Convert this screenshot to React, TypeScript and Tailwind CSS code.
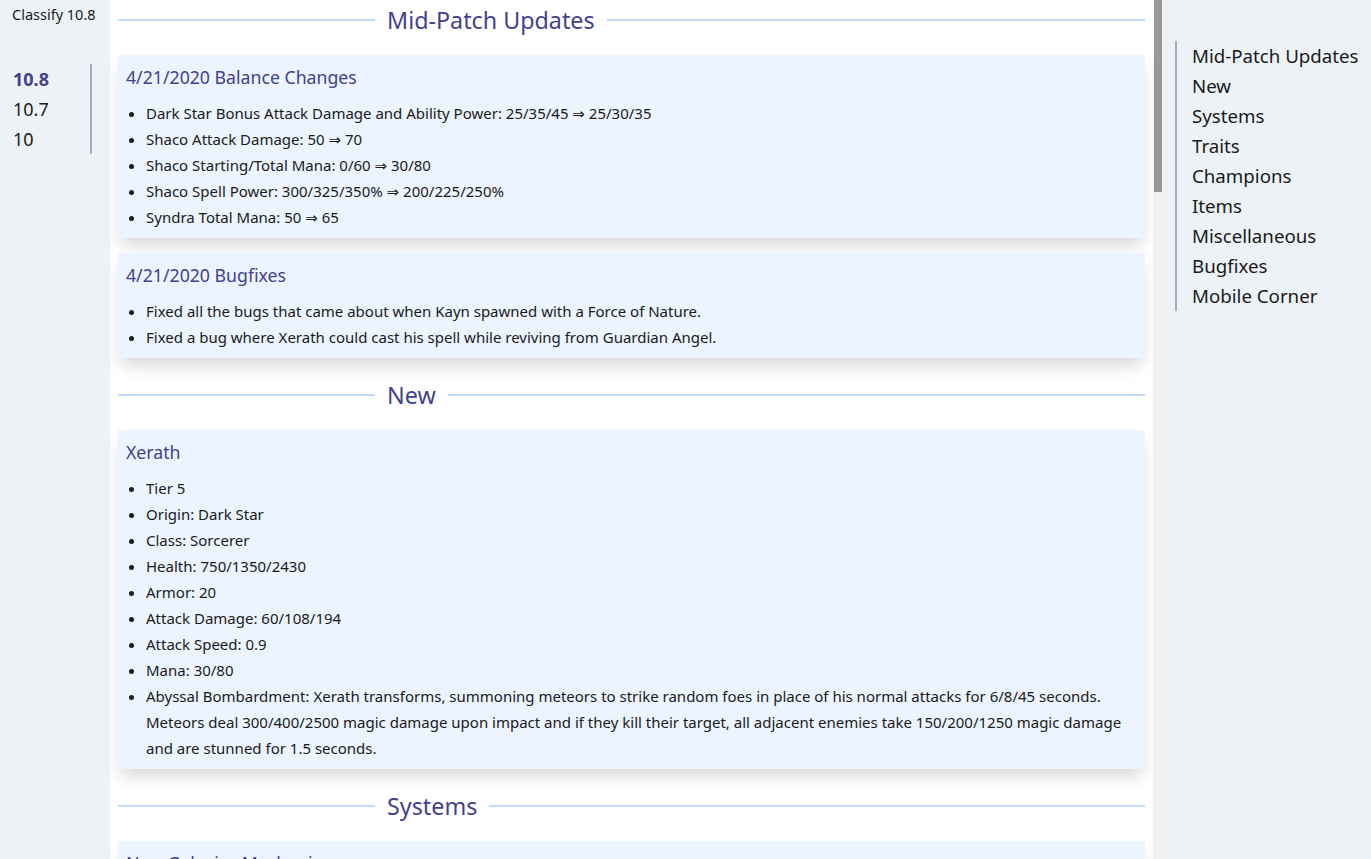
import React from "react";

type Card = { title: string; items: string[] };
type Section = { name: string; cards: Card[] };

const sections: Section[] = [
  {
    name: "Mid-Patch Updates",
    cards: [
      {
        title: "4/21/2020 Balance Changes",
        items: [
          "Dark Star Bonus Attack Damage and Ability Power: 25/35/45 ⇒ 25/30/35",
          "Shaco Attack Damage: 50 ⇒ 70",
          "Shaco Starting/Total Mana: 0/60 ⇒ 30/80",
          "Shaco Spell Power: 300/325/350% ⇒ 200/225/250%",
          "Syndra Total Mana: 50 ⇒ 65",
        ],
      },
      {
        title: "4/21/2020 Bugfixes",
        items: [
          "Fixed all the bugs that came about when Kayn spawned with a Force of Nature.",
          "Fixed a bug where Xerath could cast his spell while reviving from Guardian Angel.",
        ],
      },
    ],
  },
  {
    name: "New",
    cards: [
      {
        title: "Xerath",
        items: [
          "Tier 5",
          "Origin: Dark Star",
          "Class: Sorcerer",
          "Health: 750/1350/2430",
          "Armor: 20",
          "Attack Damage: 60/108/194",
          "Attack Speed: 0.9",
          "Mana: 30/80",
          "Abyssal Bombardment: Xerath transforms, summoning meteors to strike random foes in place of his normal attacks for 6/8/45 seconds. Meteors deal 300/400/2500 magic damage upon impact and if they kill their target, all adjacent enemies take 150/200/1250 magic damage and are stunned for 1.5 seconds.",
        ],
      },
    ],
  },
  {
    name: "Systems",
    cards: [
      {
        title: "New Galaxies Mechanic",
        items: ["Galaxies are now chosen at the start of each game."],
      },
    ],
  },
];

const toc = [
  "Mid-Patch Updates",
  "New",
  "Systems",
  "Traits",
  "Champions",
  "Items",
  "Miscellaneous",
  "Bugfixes",
  "Mobile Corner",
];

function SectionHeader({ name, first }: { name: string; first: boolean }) {
  return (
    <div className={`flex items-center h-[30px] ${first ? "" : "mt-[22px]"}`}>
      <div className="w-[257px] h-[2px] bg-[#c3dafe]" />
      <div className="px-[12px] text-[23.3px] leading-[30px] text-[#434190] whitespace-nowrap">
        {name}
      </div>
      <div className="flex-1 h-[2px] bg-[#c3dafe]" />
    </div>
  );
}

function CardView({ card, first }: { card: Card; first: boolean }) {
  return (
    <div
      className={`bg-[#ebf4ff] pt-[10px] pb-[8px] px-[8px] shadow-[0_10px_16px_-3px_rgba(0,0,0,0.16)] ${
        first ? "mt-[20px]" : "mt-[15px]"
      }`}
    >
      <div className="text-[17.7px] leading-[24px] text-[#434190]">{card.title}</div>
      <ul className="list-disc pl-[20px] mt-[11px] text-[15px] leading-[26px] text-[#1a1a1a]">
        {card.items.map((it, i) => (
          <li key={i}>{it}</li>
        ))}
      </ul>
    </div>
  );
}

export default function App() {
  return (
    <div
      className="flex h-[859px] w-[1371px] overflow-hidden bg-[#edf2f7]"
      style={{ fontFamily: '"Noto Sans", "DejaVu Sans", sans-serif' }}
    >
      <aside className="w-[110px] shrink-0 bg-[#edf2f7]">
        <div className="pl-[12px] pt-[4px] text-[14.5px] leading-[20px] text-[#1a1a1a]">
          Classify 10.8
        </div>
        <div className="mt-[40px] w-[92px] border-r-2 border-[#a0aec0] pl-[13px] text-[18px] leading-[30px] text-[#1a1a1a]">
          <div className="font-bold text-[#434190]">10.8</div>
          <div>10.7</div>
          <div>10</div>
        </div>
      </aside>
      <main className="w-[1043px] shrink-0 bg-white px-[8px] pt-[5px] overflow-hidden">
        {sections.map((s, si) => (
          <div key={s.name}>
            <SectionHeader name={s.name} first={si === 0} />
            {s.cards.map((c, ci) => (
              <CardView key={c.title} card={c} first={ci === 0} />
            ))}
          </div>
        ))}
      </main>
      <div className="w-[9px] shrink-0 bg-[#f1f1f1] relative">
        <div className="absolute left-[1px] top-0 w-[8px] h-[192px] bg-[#999999]" />
      </div>
      <nav className="flex-1 pt-[41px] pl-[13px]">
        <div className="border-l-2 border-[#a0aec0] pl-[15px] text-[18.7px] leading-[30px] text-[#1a1a1a]">
          {toc.map((t) => (
            <div key={t}>{t}</div>
          ))}
        </div>
      </nav>
    </div>
  );
}
